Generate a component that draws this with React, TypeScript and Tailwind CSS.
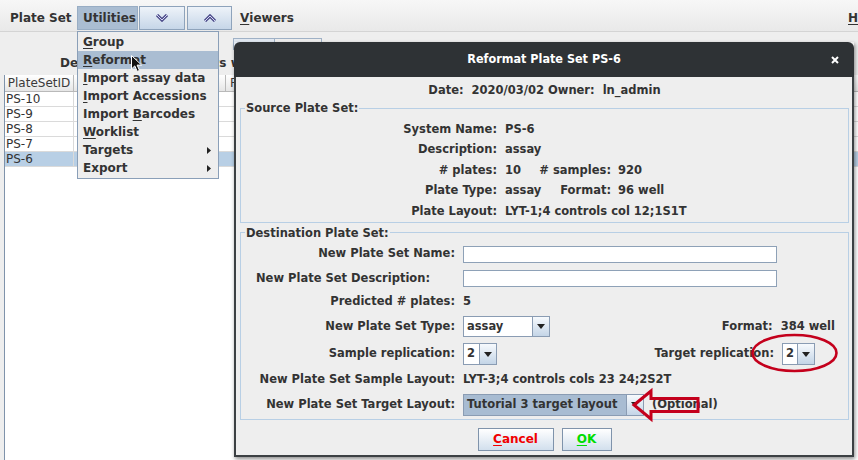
import type { ReactNode } from "react";

const plateSets = ["PS-10", "PS-9", "PS-8", "PS-7", "PS-6"];

const menuItems: { pre?: string; key?: string; post: string; sub?: boolean }[] = [
  { key: "G", post: "roup" },
  { key: "R", post: "eformat" },
  { key: "I", post: "mport assay data" },
  { key: "I", post: "mport Accessions" },
  { pre: "Import ", key: "B", post: "arcodes" },
  { key: "W", post: "orklist" },
  { post: "Targets", sub: true },
  { post: "Export", sub: true },
];

// underlined mnemonic letter
function Mn({ children }: { children: ReactNode }) {
  return <span className="underline decoration-1 underline-offset-[2px]">{children}</span>;
}

function Chevron({ up }: { up?: boolean }) {
  const pts = up ? "1,7 6,2 11,7" : "1,1 6,6 11,1";
  return (
    <svg width="12" height="8" viewBox="0 0 12 8">
      <polyline points={pts} fill="none" stroke="#4f4f8c" strokeWidth="3.2" />
      <polyline points={pts} fill="none" stroke="#d6d6f4" strokeWidth="1" />
    </svg>
  );
}

function DownTri() {
  return (
    <svg width="8" height="5" viewBox="0 0 8 5">
      <path d="M0 0H8L4 5Z" fill="#222" />
    </svg>
  );
}

function SubArrow() {
  return (
    <svg width="4" height="7" viewBox="0 0 4 7">
      <path d="M0 0L4 3.5L0 7Z" fill="#222" />
    </svg>
  );
}

function Combo({ text, className, selected }: { text: string; className: string; selected?: boolean }) {
  return (
    <div className={`flex shrink-0 border border-[#8a9cb3] ${className}`}>
      <div className={`flex flex-1 items-center whitespace-nowrap pl-[3px] ${selected ? "bg-[#a8bcd2]" : "bg-white"}`}>
        {text}
      </div>
      <div className="flex w-[17px] items-center justify-center border-l border-[#8a9cb3] bg-gradient-to-b from-[#f7fafd] to-[#c4d5e7]">
        <DownTri />
      </div>
    </div>
  );
}

function MenuBar() {
  return (
    <div className="flex h-[32px] shrink-0 items-start border-b border-[#d4d4d4] bg-gradient-to-b from-[#f7f7f7] to-[#e9e9e9] pt-[6px] text-[12px] font-bold">
      <div className="flex h-[24px] w-[77px] items-center pl-[10px]">Plate Set</div>
      <div className="flex h-[24px] w-[61px] items-center border border-[#98adc4] bg-[#aabdd2] pl-[5px]">Utilities</div>
      <div className="ml-[1px] flex h-[24px] w-[46px] items-center justify-center border border-[#8ea3bb] bg-gradient-to-b from-[#eef3f9] to-[#c6d6e8]">
        <Chevron />
      </div>
      <div className="ml-[2px] flex h-[24px] w-[45px] items-center justify-center border border-[#8ea3bb] bg-gradient-to-b from-[#eef3f9] to-[#c6d6e8]">
        <Chevron up />
      </div>
      <div className="ml-[8px] flex h-[24px] items-center">
        <Mn>V</Mn>iewers
      </div>
      <div className="flex-1" />
      <div className="flex h-[24px] w-[10px] items-center whitespace-nowrap">
        <Mn>H</Mn>elp
      </div>
    </div>
  );
}

function PlateSetTable() {
  return (
    <div className="ml-[4px] flex-1 border-l border-[#7f93ab] bg-white text-[12px]">
      <div className="flex h-[17px] border-b border-[#b9b9b9] bg-gradient-to-b from-white to-[#e6e6e6] leading-[16px] text-[#3a3a3a]">
        <div className="w-[69px] shrink-0 border-r border-[#b9b9b9] text-center">PlateSetID</div>
        <div className="w-[152px] shrink-0 border-r border-[#b9b9b9]" />
        <div className="w-[160px] shrink-0 border-r border-[#b9b9b9] pl-[4px]">Format</div>
        <div className="flex-1" />
      </div>
      {plateSets.map((id) => (
        <div
          key={id}
          className={`flex h-[15px] border-b border-[#dadada] leading-[14px] ${id === "PS-6" ? "bg-[#b8cfe5]" : ""}`}
        >
          <div className="w-[69px] shrink-0 border-r border-[#dadada] pl-[1px]">{id}</div>
        </div>
      ))}
    </div>
  );
}

function UtilitiesMenu() {
  return (
    <div className="absolute left-[77px] top-[31px] w-[142px] border border-[#8a9fb8] bg-[#eeeeee] py-[1px] text-[12px] font-bold">
      {menuItems.map((m, i) => (
        <div
          key={i}
          className={`flex h-[18px] items-center justify-between pl-[5px] pr-[7px] ${i === 1 ? "bg-[#aabdd2]" : ""}`}
        >
          <span>
            {m.pre}
            {m.key && <Mn>{m.key}</Mn>}
            {m.post}
          </span>
          {m.sub && <SubArrow />}
        </div>
      ))}
    </div>
  );
}

function Cursor() {
  return (
    <svg className="absolute left-[131px] top-[55px]" width="12" height="18" viewBox="0 0 12 18">
      <path
        d="M0.5 0.5L0.5 14L3.8 10.9L6.2 16.4L8.5 15.4L6.1 10.1L10.6 10.1Z"
        fill="#111"
        stroke="#fff"
        strokeWidth="1"
      />
    </svg>
  );
}

function SourceRow({ children }: { children: ReactNode }) {
  return <div className="flex h-[20.5px] items-center whitespace-nowrap">{children}</div>;
}

function ReformatDialog() {
  return (
    <div className="absolute left-[234px] top-[42px] flex h-[415px] w-[620px] flex-col shadow-[1px_2px_4px_rgba(0,0,0,0.45)]">
      <div className="grid h-[35px] shrink-0 grid-cols-[1fr_auto_1fr] items-center rounded-t-[6px] bg-[#2e3235] text-white">
        <span />
        <span className="font-['DejaVu_Sans_Condensed','DejaVu_Sans',sans-serif] text-[12.5px] font-bold">
          Reformat Plate Set PS-6
        </span>
        <span className="justify-self-end pr-[15px]">
          <svg width="8" height="8" viewBox="0 0 8 8">
            <path d="M1 1L7 7M7 1L1 7" stroke="#fff" strokeWidth="2" />
          </svg>
        </span>
      </div>

      <div className="flex flex-1 flex-col border-x-2 border-b-2 border-[#3c4043] bg-[#eeeeee] pl-[4px] pr-[3px] text-[11.5px] font-bold">
        <div className="mt-[4px] flex h-[20px] items-center justify-center whitespace-pre">
          Date:  2020/03/02 Owner:  ln_admin
        </div>

        <fieldset className="border border-[#b8cfe5]">
          <legend className="ml-[4px] px-[1px] leading-[14px]">Source Plate Set:</legend>
          <div className="pt-[4px]">
            <SourceRow>
              <span className="w-[256px] text-right">System Name:</span>
              <span className="ml-[8px]">PS-6</span>
            </SourceRow>
            <SourceRow>
              <span className="w-[256px] text-right">Description:</span>
              <span className="ml-[8px]">assay</span>
            </SourceRow>
            <SourceRow>
              <span className="w-[256px] text-right"># plates:</span>
              <span className="ml-[8px] w-[32px]">10</span>
              <span className="w-[74px] text-right"># samples:</span>
              <span className="ml-[7px]">920</span>
            </SourceRow>
            <SourceRow>
              <span className="w-[256px] text-right">Plate Type:</span>
              <span className="ml-[8px] w-[32px]">assay</span>
              <span className="w-[74px] text-right">Format:</span>
              <span className="ml-[7px]">96 well</span>
            </SourceRow>
            <SourceRow>
              <span className="w-[256px] text-right">Plate Layout:</span>
              <span className="ml-[8px]">LYT-1;4 controls col 12;1S1T</span>
            </SourceRow>
          </div>
        </fieldset>

        <fieldset className="mt-[3px] border border-[#b8cfe5] pb-[1px]">
          <legend className="ml-[4px] px-[1px] leading-[14px]">Destination Plate Set:</legend>
          <div className="pl-[15px] pt-[2px] whitespace-nowrap">
            <div className="flex h-[25px] items-center">
              <span className="w-[199px] text-right">New Plate Set Name:</span>
              <div className="ml-[8px] h-[17px] w-[314px] border border-[#8ea1b7] bg-white" />
            </div>
            <div className="flex h-[24px] items-center">
              <span className="w-[199px]">New Plate Set Description:</span>
              <div className="ml-[8px] h-[17px] w-[314px] border border-[#8ea1b7] bg-white" />
            </div>
            <div className="flex h-[23px] items-center">
              <span className="w-[199px] text-right">Predicted # plates:</span>
              <span className="ml-[8px]">5</span>
            </div>
            <div className="flex h-[26px] items-center">
              <span className="w-[199px] text-right">New Plate Set Type:</span>
              <Combo className="ml-[8px] h-[21px] w-[87px]" text="assay" />
              <span className="ml-auto">Format:</span>
              <span className="ml-[8px] mr-[13px]">384 well</span>
            </div>
            <div className="flex h-[29px] items-center">
              <span className="w-[199px] text-right">Sample replication:</span>
              <Combo className="ml-[8px] h-[22px] w-[34px]" text="2" />
              <span className="ml-auto">Target replication:</span>
              <Combo className="ml-[8px] mr-[33px] h-[22px] w-[33px]" text="2" />
            </div>
            <div className="flex h-[23px] items-center">
              <span className="w-[199px] text-right">New Plate Set Sample Layout:</span>
              <span className="ml-[8px]">LYT-3;4 controls cols 23 24;2S2T</span>
            </div>
            <div className="flex h-[26px] items-center">
              <span className="w-[199px] text-right">New Plate Set Target Layout:</span>
              <Combo className="ml-[8px] h-[22px] w-[181px]" text="Tutorial 3 target layout" selected />
              <span className="ml-[8px]">(Optional)</span>
            </div>
          </div>
        </fieldset>

        <div className="mt-[8px] flex justify-center gap-[8px] text-[12px]">
          <button className="h-[23px] w-[76px] border border-[#7f93ab] bg-gradient-to-b from-white to-[#d2dfed] font-bold text-[#f00000]">
            <Mn>C</Mn>ancel
          </button>
          <button className="h-[23px] w-[50px] border border-[#7f93ab] bg-gradient-to-b from-white to-[#d2dfed] font-bold text-[#00dd00]">
            <Mn>O</Mn>K
          </button>
        </div>
      </div>
    </div>
  );
}

function Annotations() {
  return (
    <svg className="pointer-events-none absolute left-0 top-0" width="858" height="460">
      <ellipse cx="794.5" cy="353" rx="42" ry="18" fill="none" stroke="#c4001c" strokeWidth="2.6" />
      <polygon
        points="634,405 651,391 651,398.5 698,398.5 698,411.5 651,411.5 651,419"
        fill="none"
        stroke="#c4001c"
        strokeWidth="3"
      />
    </svg>
  );
}

export default function App() {
  return (
    <div className="relative flex h-[460px] w-[858px] flex-col overflow-hidden bg-[#eeeeee] font-['DejaVu_Sans','Liberation_Sans',sans-serif] text-[#333333]">
      <MenuBar />
      <div className="shrink-0 pt-[6px]">
        <div className="ml-[233px] flex h-[12px]">
          <div className="w-[42px] border-x border-t border-[#9fb1c6] bg-[#e2e9f2]" />
          <div className="w-[47px] border-r border-t border-[#9fb1c6]" />
        </div>
        <div className="flex h-[25px] items-center whitespace-nowrap pl-[60px] text-[12px] font-bold">
          Description of plate sets with Targets
        </div>
      </div>
      <PlateSetTable />
      <UtilitiesMenu />
      <Cursor />
      <ReformatDialog />
      <Annotations />
    </div>
  );
}
